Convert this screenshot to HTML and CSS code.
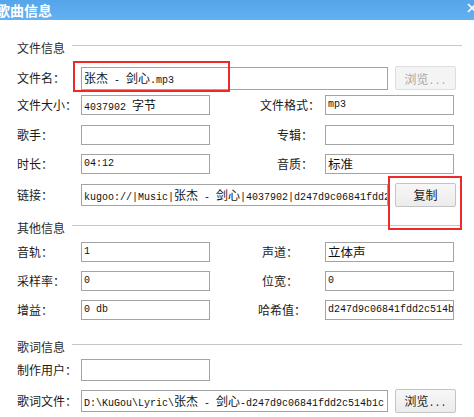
FILE: index.html
```html
<!DOCTYPE html>
<html lang="zh-CN">
<head>
<meta charset="utf-8">
<title>歌曲信息</title>
<link rel="stylesheet" href="styles.css">
</head>
<body>
<div class="dialog">
  <header class="titlebar">
    <span class="title">歌曲信息</span>
    <svg class="close" width="10" height="10" viewBox="0 0 10 10"><path d="M1 1L9 9M9 1L1 9" stroke="#fff" stroke-width="1.6"/></svg>
  </header>
  <main class="content">
    <div class="group-head g1"><span class="gtitle">文件信息</span><i class="rule"></i></div>
    <div class="row wide r-name">
      <span class="lbl">文件名：</span>
      <div class="field tall"><span class="cj">张杰</span> - <span class="cj">剑心</span>.mp3</div>
      <button class="btn disabled"><span class="cj">浏览</span>...</button>
    </div>
    <div class="row pair r1">
      <span class="lbl">文件大小：</span><div class="field">4037902 <span class="cj">字节</span></div>
      <span class="lbl rl l-fmt">文件格式：</span><div class="field">mp3</div>
    </div>
    <div class="row pair r2">
      <span class="lbl">歌手：</span><div class="field"></div>
      <span class="lbl rl l-mid">专辑：</span><div class="field"></div>
    </div>
    <div class="row pair r3">
      <span class="lbl">时长：</span><div class="field">04:12</div>
      <span class="lbl rl l-mid">音质：</span><div class="field"><span class="cj big">标准</span></div>
    </div>
    <div class="row wide r-link">
      <span class="lbl">链接：</span>
      <div class="field tall">kugoo://|Music|<span class="cj">张杰</span> - <span class="cj">剑心</span>|4037902|d247d9c06841fdd2c514b1c</div>
      <button class="btn"><span class="cj">复制</span></button>
    </div>

    <div class="group-head g2"><span class="gtitle">其他信息</span><i class="rule"></i></div>
    <div class="row pair r4">
      <span class="lbl">音轨：</span><div class="field">1</div>
      <span class="lbl rl l-low">声道：</span><div class="field"><span class="cj big">立体声</span></div>
    </div>
    <div class="row pair r5">
      <span class="lbl">采样率：</span><div class="field">0</div>
      <span class="lbl rl l-low">位宽：</span><div class="field">0</div>
    </div>
    <div class="row pair r6">
      <span class="lbl">增益：</span><div class="field">0 db</div>
      <span class="lbl rl l-hash">哈希值：</span><div class="field">d247d9c06841fdd2c514b1c</div>
    </div>

    <div class="group-head g3"><span class="gtitle">歌词信息</span><i class="rule"></i></div>
    <div class="row pair r7">
      <span class="lbl">制作用户：</span><div class="field tall"></div>
    </div>
    <div class="row wide r-lrc">
      <span class="lbl">歌词文件：</span>
      <div class="field tall">D:\KuGou\Lyric\<span class="cj">张杰</span> - <span class="cj">剑心</span>-d247d9c06841fdd2c514b1c</div>
      <button class="btn"><span class="cj">浏览</span>...</button>
    </div>
  </main>
  <div class="mark mark-name"></div>
  <div class="mark mark-copy"></div>
</div>
</body>
</html>
```

FILE: styles.css
```css
html, body {
  margin: 0;
  padding: 0;
  background: #ffffff;
}

.dialog {
  position: relative;
  width: 474px;
  height: 417px;
  overflow: hidden;
  background: #ffffff;
  font-family: "Noto Sans CJK SC", "Noto Sans", sans-serif;
  font-size: 12px;
  color: #1a1a1a;
}

.titlebar {
  display: flex;
  align-items: center;
  justify-content: space-between;
  height: 20px;
  background: linear-gradient(#55a5ea, #62b1f2);
}

.title {
  margin-left: -4px;
  color: #ffffff;
  font-weight: bold;
  font-size: 14px;
  line-height: 18px;
}

.close {
  margin-right: -3px;
  margin-top: -4px;
}

.content {
  display: flex;
  flex-direction: column;
  padding-left: 17px;
}

.group-head {
  display: flex;
  align-items: flex-start;
  height: 16px;
  line-height: 16px;
  color: #2a2a2a;
}

.gtitle {
  width: 55px;
}

.rule {
  display: block;
  width: 390px;
  margin-top: 5px;
  border-top: 1px solid #c6c6c6;
}

.g1 { margin-top: 20px; }
.g2 { margin-top: 13px; }
.g3 { margin-top: 19px; }

.row {
  display: grid;
  align-items: center;
}

.pair {
  grid-template-columns: 64px 129px 48px 67px 129px;
  height: 20px;
}

.wide {
  grid-template-columns: 64px 307px 7px 61px;
  height: 25px;
}

.wide .btn {
  grid-column: 4;
}

.r-name { margin-top: 10px; height: 24px; }
.r1 { margin-top: 5px; }
.r2 { margin-top: 10px; }
.r3 { margin-top: 9px; }
.r-link { margin-top: 8px; }
.r4 { margin-top: 6px; }
.r5 { margin-top: 9px; }
.r6 { margin-top: 9px; }
.r7 { margin-top: 4px; height: 22px; }
.r-lrc { margin-top: 7px; }

.lbl {
  white-space: nowrap;
  line-height: 16px;
}

.rl {
  grid-column: 4;
}

.l-fmt { margin-left: 2px; }
.l-mid { margin-left: 19px; }
.l-low { margin-left: 4px; }
.l-hash { margin-left: 0; }

.field {
  box-sizing: border-box;
  height: 20px;
  padding-left: 2px;
  border: 1px solid #a3a3a3;
  background: #ffffff;
  font-family: "Liberation Mono", "DejaVu Sans Mono", monospace;
  font-size: 10px;
  line-height: 17px;
  color: #111111;
  white-space: pre;
  overflow: hidden;
}

.field.tall {
  height: 22px;
  line-height: 19px;
}

.r-name .field.tall {
  height: 23px;
  margin-top: 1px;
}

.cj {
  font-family: "Noto Sans CJK SC", sans-serif;
  font-size: 12px;
}

.cj.big {
  font-size: 12.5px;
}

.btn {
  box-sizing: border-box;
  height: 24px;
  padding: 0;
  border: 1px solid #c4c4c4;
  border-radius: 2px;
  background: linear-gradient(#f7f7f7, #ececec);
  font-family: "Liberation Mono", monospace;
  font-size: 10px;
  color: #1a1a1a;
  cursor: default;
}

.btn.disabled {
  border-color: #dedede;
  background: #f4f4f4;
  color: #a8a8a8;
}

.mark {
  position: absolute;
  box-sizing: border-box;
  border: 2px solid #ec2a2a;
}

.mark-name {
  left: 73px;
  top: 61px;
  width: 157px;
  height: 31px;
}

.mark-copy {
  left: 388px;
  top: 176px;
  width: 74px;
  height: 54px;
}
```
